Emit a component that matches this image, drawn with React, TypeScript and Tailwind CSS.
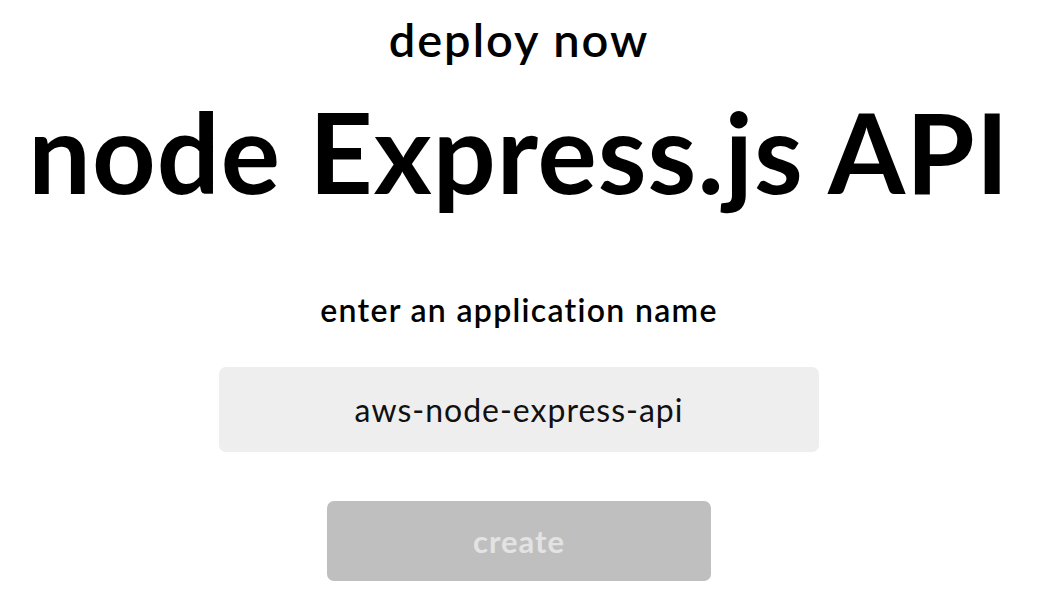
export default function App() {
  return (
    <div className="min-h-screen bg-white font-['Lato',sans-serif] text-black flex flex-col items-center [font-variant-ligatures:none]">
      <p className="mt-[16px] text-[47px] leading-none font-semibold tracking-[2px]">deploy now</p>
      <h1 className="mt-[33px] text-[111px] leading-none font-bold tracking-[1px] whitespace-nowrap">
        node Express.js API
      </h1>
      <p className="mt-[87px] text-[32px] leading-none font-semibold tracking-[1.3px]">
        enter an application name
      </p>
      <div className="mt-[41px] w-[600px] h-[85px] rounded-[7px] bg-[#eeeeee] flex items-center justify-center">
        <span className="text-[32px] leading-none font-normal tracking-[1px] text-[#111]">
          aws-node-express-api
        </span>
      </div>
      <button
        className="mt-[49px] w-[384px] h-[80px] rounded-[7px] bg-[#bfbfbf] text-[#e3e3e3] text-[31px] font-bold tracking-[1px] leading-none flex items-center justify-center"
        disabled
      >
        create
      </button>
    </div>
  );
}
